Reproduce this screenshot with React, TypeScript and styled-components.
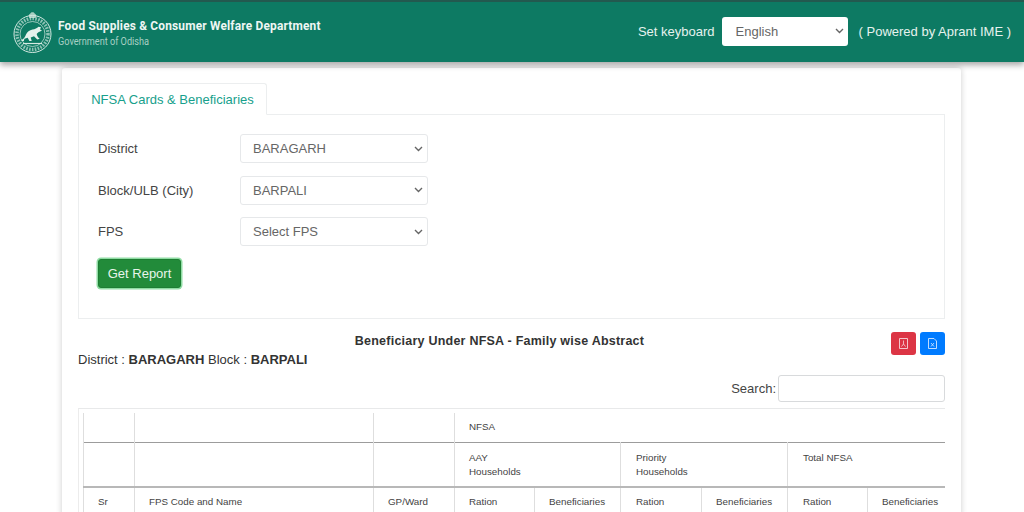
import styled, { createGlobalStyle } from 'styled-components';

const GlobalStyle = createGlobalStyle`
  html, body {
    margin: 0;
    padding: 0;
    height: 512px;
    overflow: hidden;
    background: #fff;
    font-family: "Liberation Sans", Arial, sans-serif;
  }
  * { box-sizing: border-box; }
`;

const chevron = `url("data:image/svg+xml,%3Csvg xmlns='http://www.w3.org/2000/svg' width='9' height='6' viewBox='0 0 9 6'%3E%3Cpath d='M1 1l3.500 3.500L8 1' fill='none' stroke='%23666' stroke-width='1.400'/%3E%3C/svg%3E")`;

const Emblem = () => (
  <svg width="41" height="42" viewBox="0 0 41 42" fill="none" stroke="#d5e9e2">
    <path d="M17.500 7c-1.400-1.800-.8-4 .9-4.500.4-1.700 3.800-1.700 4.200 0 1.700.5 2.300 2.700.9 4.500z" fill="#a9cfc2" stroke="none" />
    <circle cx="20.500" cy="23" r="18.500" strokeWidth="1" />
    <circle cx="20.500" cy="23" r="12.500" strokeWidth="0.7" />
    <circle cx="20.500" cy="23" r="15.500" strokeWidth="3.500" strokeDasharray="1.600 1.300" opacity="0.65" />
    <path
      d="M9.500 29c2.500-1 3.500-3 4.500-5.500 1-2.500 3.500-4.500 6.500-5 2.500-.4 4.500-1.200 6-2.800l2.500.6-1 2.200 2 1-2.500 1.200c-1 .4-2.200 1.200-2.800 2.300.2 2 1.300 3.200 3 4.800l-2.400.6-3.300-3.200-3.300 1.200 1 3.600h-2.300l-1.700-3.200-3.300 1-.6 2.200h-2.200z"
      fill="#e4f1ec"
      stroke="none"
    />
    <path d="M11 32.500h19" strokeWidth="1.200" />
  </svg>
);

const PdfIcon = () => (
  <svg width="9" height="11" viewBox="0 0 9 11" fill="none" stroke="#f6d5d9" strokeWidth="0.9">
    <path d="M.5.5h8v10h-8z" />
    <path d="M4.500 2.500v3.500M2.500 8.500l2-2.500 2 2.500" strokeWidth="0.8" />
  </svg>
);

const ExcelIcon = () => (
  <svg width="9" height="11" viewBox="0 0 9 11" fill="none" stroke="#d5e8ff" strokeWidth="0.9">
    <path d="M.5.5h5.500l2.500 2.500v7.500h-8z" />
    <path d="M3 5l3 3.500M6 5l-3 3.500" strokeWidth="0.8" />
  </svg>
);

const App = () => {
  return (
    <>
      <GlobalStyle />
      <Header>
        <Brand>
          <Emblem />
          <BrandText>
            <BrandTitle>Food Supplies &amp; Consumer Welfare Department</BrandTitle>
            <BrandSub>Government of Odisha</BrandSub>
          </BrandText>
        </Brand>
        <Keyboard>
          <KeyboardText>Set keyboard</KeyboardText>
          <KeyboardSelect defaultValue="English">
            <option>English</option>
          </KeyboardSelect>
          <PoweredText>( Powered by Aprant IME )</PoweredText>
        </Keyboard>
      </Header>
      <Card>
        <Tab>NFSA Cards &amp; Beneficiaries</Tab>
        <Panel>
          <FormRow>
            <FormLabel>District</FormLabel>
            <FormSelect defaultValue="BARAGARH">
              <option>BARAGARH</option>
            </FormSelect>
          </FormRow>
          <FormRow>
            <FormLabel>Block/ULB (City)</FormLabel>
            <FormSelect defaultValue="BARPALI">
              <option>BARPALI</option>
            </FormSelect>
          </FormRow>
          <FormRow>
            <FormLabel>FPS</FormLabel>
            <FormSelect defaultValue="Select FPS">
              <option>Select FPS</option>
            </FormSelect>
          </FormRow>
          <ReportButton>Get Report</ReportButton>
        </Panel>
        <ReportHead>
          <ReportInfo>
            <ReportTitle>Beneficiary Under NFSA - Family wise Abstract</ReportTitle>
            <ReportMeta>
              District : <b>BARAGARH</b> Block : <b>BARPALI</b>
            </ReportMeta>
          </ReportInfo>
          <Exports>
            <ExportButton $color="#dc3545"><PdfIcon /></ExportButton>
            <ExportButton $color="#007bff"><ExcelIcon /></ExportButton>
          </Exports>
        </ReportHead>
        <SearchRow>
          Search:
          <SearchInput />
        </SearchRow>
        <TableWrap>
          <Table>
            <colgroup>
              <col width="51" />
              <col width="239" />
              <col width="81" />
              <col width="80" />
              <col width="86" />
              <col width="81" />
              <col width="86" />
              <col width="80" />
              <col width="90" />
            </colgroup>
            <tbody>
              <Row $height={29} $line={1}>
                <Cell />
                <Cell />
                <Cell />
                <Cell colSpan={6}>NFSA</Cell>
              </Row>
              <Row $height={45} $line={2}>
                <Cell />
                <Cell />
                <Cell />
                <GroupCell colSpan={2}>AAY<br />Households</GroupCell>
                <GroupCell colSpan={2} $shift={1}>Priority<br />Households</GroupCell>
                <GroupCell colSpan={2} $shift={1}>Total NFSA<br />&nbsp;</GroupCell>
              </Row>
              <Row $height={30} $line={1}>
                <Cell>Sr</Cell>
                <Cell>FPS Code and Name</Cell>
                <Cell>GP/Ward</Cell>
                <Cell>Ration</Cell>
                <Cell>Beneficiaries</Cell>
                <ShiftedCell>Ration</ShiftedCell>
                <Cell>Beneficiaries</Cell>
                <ShiftedCell>Ration</ShiftedCell>
                <Cell>Beneficiaries</Cell>
              </Row>
            </tbody>
          </Table>
        </TableWrap>
      </Card>
    </>
  );
};

const Header = styled.header`
  position: relative;
  z-index: 2;
  height: 62px;
  padding: 0 13px 0 12px;
  display: flex;
  align-items: center;
  justify-content: space-between;
  background: #0d7a63;
  border-top: 2px solid #23594f;
  box-shadow: 0 3px 6px rgba(0, 0, 0, 0.35);
`;
const Brand = styled.div`
  display: flex;
  align-items: center;
  gap: 5px;
`;
const BrandText = styled.div`
  display: flex;
  flex-direction: column;
  gap: 3px;
  transform: scaleX(0.915);
  transform-origin: left center;
`;
const BrandTitle = styled.div`
  font-family: Roboto, sans-serif;
  font-size: 13px;
  font-weight: 700;
  letter-spacing: 0.2px;
  color: #eef6f3;
  white-space: nowrap;
`;
const BrandSub = styled.div`
  font-family: Roboto, sans-serif;
  font-size: 10px;
  color: #a9d0c4;
`;
const Keyboard = styled.div`
  display: flex;
  align-items: center;
  gap: 7px;
  margin-bottom: 2px;
`;
const KeyboardText = styled.span`
  font-size: 13px;
  color: #e6f2ee;
  white-space: nowrap;
`;
const PoweredText = styled(KeyboardText)`
  margin-left: 4px;
`;
const KeyboardSelect = styled.select`
  appearance: none;
  width: 126px;
  height: 29px;
  padding: 0 13px 0 14px;
  border: none;
  border-radius: 3px;
  background: #fff ${chevron} no-repeat right 4px center;
  color: #666;
  font-family: inherit;
  font-size: 13px;
`;
const Card = styled.main`
  width: 899px;
  margin: 6px 0 0 62px;
  padding: 15px 16px 0;
  background: #fff;
  border-radius: 3px;
  box-shadow: 0 0 6px rgba(0, 0, 0, 0.2);
`;
const Tab = styled.div`
  width: 189px;
  height: 32px;
  display: flex;
  align-items: center;
  justify-content: center;
  margin-bottom: -1px;
  position: relative;
  background: #fff;
  border: 1px solid #eceeef;
  border-bottom-color: #fff;
  border-radius: 3px 3px 0 0;
  color: #17a08c;
  font-size: 13px;
`;
const Panel = styled.section`
  height: 205px;
  padding: 19px 19px 0;
  border: 1px solid #eceeef;
`;
const FormRow = styled.div`
  display: flex;
  align-items: center;
  height: 29px;
  margin-bottom: 12.500px;
`;
const FormLabel = styled.label`
  width: 142px;
  font-size: 13px;
  color: #444;
`;
const FormSelect = styled.select`
  appearance: none;
  width: 188px;
  height: 29px;
  padding: 0 12px;
  background: #fff ${chevron} no-repeat right 4px center;
  border: 1px solid #e6e8ea;
  border-radius: 3px;
  color: #666;
  font-family: inherit;
  font-size: 13px;
`;
const ReportButton = styled.button`
  display: block;
  width: 83px;
  height: 29px;
  margin-top: 13px;
  padding: 0;
  background: #228b3a;
  border: 1px solid #1e7e34;
  border-radius: 3px;
  box-shadow: 0 0 0 1.500px #8fdca3;
  color: #e8f5eb;
  font-family: inherit;
  font-size: 13px;
`;
const ReportHead = styled.div`
  display: flex;
  justify-content: space-between;
  align-items: flex-start;
  padding-top: 13px;
`;
const ReportInfo = styled.div`
  flex: 1;
`;
const ReportTitle = styled.div`
  width: 843px;
  padding-top: 2px;
  text-align: center;
  font-size: 12.500px;
  font-weight: 700;
  letter-spacing: 0.23px;
  color: #333;
`;
const ReportMeta = styled.div`
  margin-top: 4px;
  font-size: 13px;
  color: #333;
`;
const Exports = styled.div`
  display: flex;
  gap: 4px;
  margin-left: -54px;
`;
const ExportButton = styled.button<{ $color: string }>`
  width: 25px;
  height: 23px;
  padding: 0;
  display: flex;
  align-items: center;
  justify-content: center;
  background: ${({ $color }) => $color};
  border: none;
  border-radius: 3px;
`;
const SearchRow = styled.div`
  display: flex;
  justify-content: flex-end;
  align-items: center;
  gap: 2px;
  margin-top: 8px;
  font-size: 13px;
  color: #444;
`;
const SearchInput = styled.input`
  width: 167px;
  height: 27px;
  padding: 0 8px;
  background: #fff;
  border: 1px solid #d8dadc;
  border-radius: 3px;
`;
const TableWrap = styled.div`
  margin-top: 6px;
  padding: 4px 0 0 4px;
  border-top: 1px solid #e8e9ea;
  border-left: 1px solid #ececec;
  overflow: hidden;
`;
const Table = styled.table`
  width: 862px;
  table-layout: fixed;
  border-collapse: collapse;
  font-size: 9.800px;
  color: #444;
`;
const Row = styled.tr<{ $height: number; $line: number }>`
  height: ${({ $height }) => $height}px;
  border-bottom: ${({ $line }) => $line}px solid ${({ $line }) => ($line > 1 ? '#b8b8b8' : '#9c9c9c')};
`;
const Cell = styled.td`
  padding: 0 14px;
  border: 1px solid #dedede;
  border-top: none;
  border-bottom: none;
  line-height: 14px;
  white-space: nowrap;
`;
const GroupCell = styled(Cell)<{ $shift?: number }>`
  padding-top: 2px;
  padding-left: ${({ $shift = 0 }) => 14 + $shift}px;
`;
const ShiftedCell = styled(Cell)`
  padding-left: 15px;
`;

export default App;
